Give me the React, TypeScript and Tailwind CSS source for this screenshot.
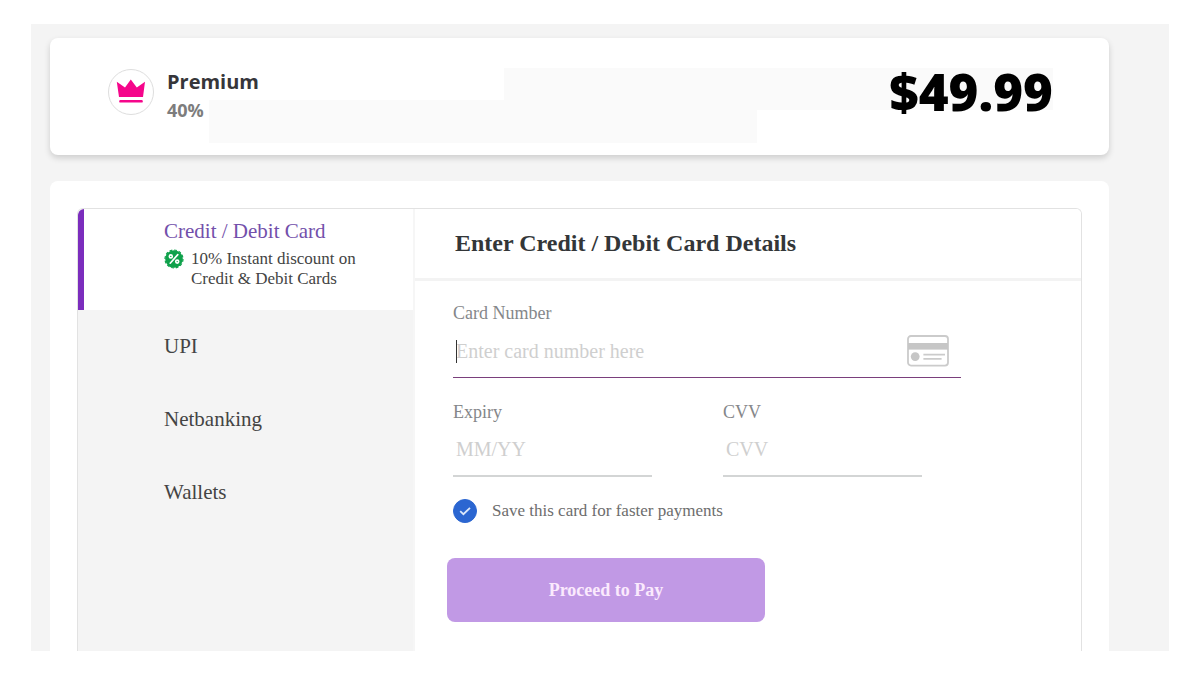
import React, { useState } from "react";

const METHODS = ["UPI", "Netbanking", "Wallets"]

const CrownIcon : React.FC = () => {
    return (
        <svg width="30" height="26" viewBox="0 0 30 26" fill="#f5068b" aria-hidden="true">
            <path d="M0.8 2.8 L9 8.4 L14.8 0.4 L20.8 8.4 L29 2.8 L27 18 H3 Z" />
            <rect x="3.2" y="21" width="23.6" height="2.6" rx="1.2" />
        </svg>
    )
}

const DiscountIcon : React.FC = () => {
    return (
        <svg className="flex-none" width="20" height="20" viewBox="0 0 20 20" aria-hidden="true">
            <circle cx="10" cy="10" r="8.8" fill="#0fa14b" />
            <circle cx="10" cy="10" r="9" fill="none" stroke="#0fa14b" strokeWidth="1.2" strokeDasharray="2.8 1.9" />
            <g fill="none" stroke="#fff" strokeWidth="1.6" strokeLinecap="round">
                <path d="M13.8 5.6 L6.2 14.2" />
                <circle cx="6.8" cy="7.4" r="1.5" />
                <circle cx="13.2" cy="12.6" r="1.5" />
            </g>
        </svg>
    )
}

const CardIcon : React.FC = () => {
    return (
        <svg className="flex-none" width="42" height="32" viewBox="0 0 42 32" aria-hidden="true">
            <rect x="1" y="1" width="40" height="29.6" rx="3" fill="none" stroke="#cbcbcb" strokeWidth="1.8" />
            <rect x="1" y="8" width="40" height="6.6" fill="#c6c6c6" />
            <circle cx="8.2" cy="21.6" r="4.4" fill="#c6c6c6" />
            <path d="M16.4 19.6 H38 M16.4 23.8 H34.6" stroke="#cbcbcb" strokeWidth="1.8" />
        </svg>
    )
}

const PlanBar : React.FC = () => {
    return (
        <header className="relative flex h-[117px] items-start rounded-lg bg-white pr-14 pl-[58px] shadow-[0_3px_6px_rgba(0,0,0,0.16)]">
            {/* blanked out plan details */}
            <div className="absolute top-[62px] left-[159px] h-[43px] w-[548px] bg-[#fafafa]" />
            <div className="absolute top-[30px] right-14 left-[454px] h-[42px] bg-[#fafafa]" />
            <div className="mt-[31px] flex size-[46px] flex-none items-center justify-center rounded-full border border-[#dedede]">
                <CrownIcon />
            </div>
            <div className="mt-8 ml-[13px] font-['Open_Sans',sans-serif] font-bold">
                <h1 className="text-xl leading-6 text-[#36363a]">Premium</h1>
                <p className="mt-1 text-lg leading-6 text-[#7d7d7d]">40%</p>
            </div>
            <div className="relative mt-[23px] ml-auto font-['Open_Sans',sans-serif] text-[51px] leading-[60px] font-extrabold text-black">
                $49.99
            </div>
        </header>
    )
}

const MethodList : React.FC = () => {
    return (
        <nav className="w-[337px] flex-none border-r-2 border-[#f6f6f6] bg-[#f4f4f4]">
            <button type="button" className="flex h-[101px] w-full flex-col items-start rounded-tl-md border-l-[6px] border-[#7b2dbd] bg-white pt-2 pl-20 text-left">
                <span className="text-[21px] leading-7 text-[#7350ab]">Credit / Debit Card</span>
                <span className="flex gap-[7px] pt-1 text-[17px] leading-5 text-[#444]">
                    <DiscountIcon />
                    <span>10% Instant discount on<br />Credit &amp; Debit Cards</span>
                </span>
            </button>
            {METHODS.map((name) => (
                <button key={name} type="button" className="block h-[73px] w-full pl-[86px] text-left text-[21px] text-[#444]">
                    {name}
                </button>
            ))}
        </nav>
    )
}

const CardForm : React.FC = () => {
    const [save, setSave] = useState(true)

    return (
        <form className="min-w-0 flex-1 bg-white" onSubmit={(e) => e.preventDefault()}>
            <h2 className="h-[72px] border-b-[3px] border-[#f3f3f3] pl-10 text-2xl leading-[68px] font-bold text-[#333638]">
                Enter Credit / Debit Card Details
            </h2>
            <div className="pt-5 pl-[38px]">
                <div className="w-[508px] max-w-full">
                    <label htmlFor="number" className="block text-lg leading-6 text-[#85878a]">Card Number</label>
                    <div className="relative flex h-[53px] items-center border-b border-[#7a3f7c] pr-3">
                        <span className="absolute left-[3px] h-[23px] w-px bg-[#333]" />
                        <input id="number" className="min-w-0 flex-1 pl-[3px] text-xl outline-none placeholder:text-[#cfcfcf]" placeholder="Enter card number here" />
                        <CardIcon />
                    </div>
                </div>
                <div className="mt-[22px] flex gap-[71px]">
                    <div className="w-[199px]">
                        <label htmlFor="expiry" className="block text-lg leading-6 text-[#85878a]">Expiry</label>
                        <input id="expiry" className="h-[53px] w-full border-b-2 border-[#d3d5d5] pl-[3px] text-xl outline-none placeholder:text-[#cfcfcf]" placeholder="MM/YY" />
                    </div>
                    <div className="w-[199px]">
                        <label htmlFor="cvv" className="block text-lg leading-6 text-[#85878a]">CVV</label>
                        <input id="cvv" className="h-[53px] w-full border-b-2 border-[#d3d5d5] pl-[3px] text-xl outline-none placeholder:text-[#cfcfcf]" placeholder="CVV" />
                    </div>
                </div>
                <label className="mt-[22px] flex w-fit items-center gap-[15px] text-[17px] leading-6 text-[#6d6d6d]">
                    <span className="relative flex size-6">
                        <input type="checkbox" checked={save} onChange={(e) => setSave(e.target.checked)} className="size-6 appearance-none rounded-full border border-[#2b66d1] checked:bg-[#2b66d1]" />
                        <svg className="pointer-events-none absolute inset-0" width="24" height="24" viewBox="0 0 24 24" fill="none" stroke="#dce8fb" strokeWidth="1.8" aria-hidden="true">
                            <path d="M7.2 12.2 L10.4 15.2 L17 8.8" />
                        </svg>
                    </span>
                    Save this card for faster payments
                </label>
                <button type="submit" className="mt-[35px] -ml-1.5 h-16 w-[318px] rounded-lg bg-[#c199e5] text-lg font-bold text-[#fbeafd]">
                    Proceed to Pay
                </button>
            </div>
        </form>
    )
}

const App : React.FC = () => {
    return (
        <div className="bg-white px-[31px] py-6 font-['Liberation_Serif',serif]">
            <main className="bg-[#f4f4f4] pt-3.5 pr-[60px] pl-[19px]">
                <PlanBar />
                <section className="mt-[26px] rounded-t-lg bg-white px-[27px] pt-[27px]">
                    <div className="flex min-h-[443px] overflow-hidden rounded-t-md border border-b-0 border-[#e2e2e2]">
                        <MethodList />
                        <CardForm />
                    </div>
                </section>
            </main>
        </div>
    )
}

export default App
